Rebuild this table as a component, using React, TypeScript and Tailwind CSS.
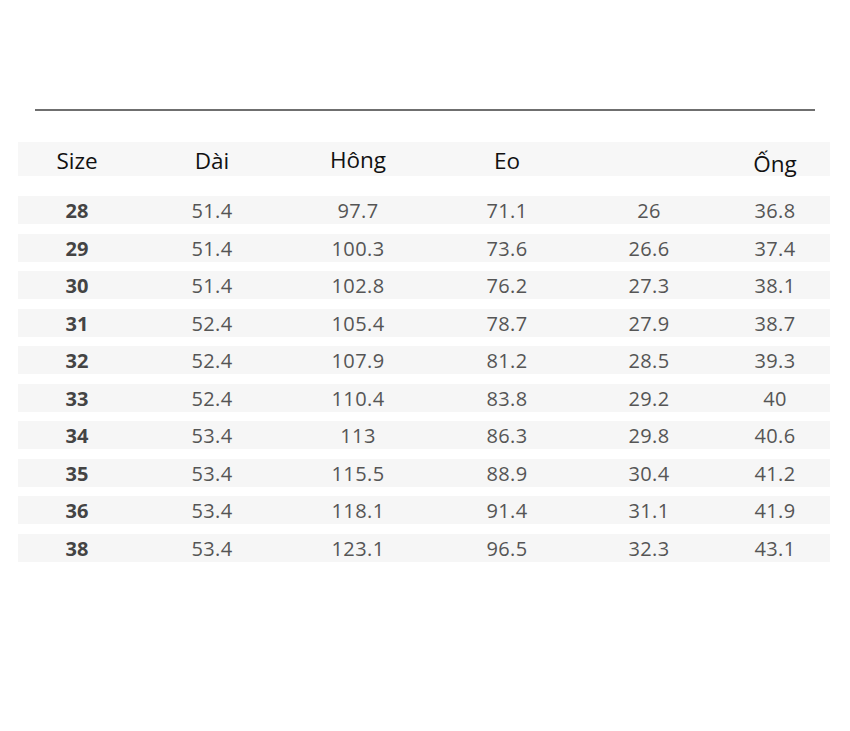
import React from "react";

const rows: string[][] = [
  ["28", "51.4", "97.7", "71.1", "26", "36.8"],
  ["29", "51.4", "100.3", "73.6", "26.6", "37.4"],
  ["30", "51.4", "102.8", "76.2", "27.3", "38.1"],
  ["31", "52.4", "105.4", "78.7", "27.9", "38.7"],
  ["32", "52.4", "107.9", "81.2", "28.5", "39.3"],
  ["33", "52.4", "110.4", "83.8", "29.2", "40"],
  ["34", "53.4", "113", "86.3", "29.8", "40.6"],
  ["35", "53.4", "115.5", "88.9", "30.4", "41.2"],
  ["36", "53.4", "118.1", "91.4", "31.1", "41.9"],
  ["38", "53.4", "123.1", "96.5", "32.3", "43.1"],
];

const grid = "grid grid-cols-[118px_152px_140px_158px_126px_118px]";

export default function App() {
  return (
    <div
      className="w-[850px] h-[731px] bg-white overflow-hidden"
      style={{ fontFamily: '"Open Sans", "Noto Sans", sans-serif' }}
    >
      <div className="pt-[109px] px-[35px]">
        <div className="h-[2px] w-[780px] bg-[#6f6f6f]" />
      </div>
      <div className="pl-[18px] pt-[31px]">
        <div className={`${grid} h-[34px] w-[812px] bg-[#f7f7f7] items-center text-[22.5px] text-[#111] justify-items-center`}>
          <div className="-mt-[2px]">Size</div>
          <div className="-mt-[2px]">Dài</div>
          <div className="-mt-[4px]">Hông</div>
          <div className="-mt-[1px]">Eo</div>
          <div></div>
          <div className="pl-[8px] mt-[5px]">Ống</div>
        </div>
        <div className="flex flex-col gap-[9.5px] mt-[20px]">
          {rows.map((r) => (
            <div
              key={r[0]}
              className={`${grid} h-[28px] w-[812px] bg-[#f6f6f6] items-center justify-items-center text-[20px] tracking-[0.4px] text-[#555]`}
            >
              <div className="font-bold text-[#444] tracking-normal">{r[0]}</div>
              <div>{r[1]}</div>
              <div>{r[2]}</div>
              <div>{r[3]}</div>
              <div>{r[4]}</div>
              <div className="pl-[8px]">{r[5]}</div>
            </div>
          ))}
        </div>
      </div>
    </div>
  );
}
